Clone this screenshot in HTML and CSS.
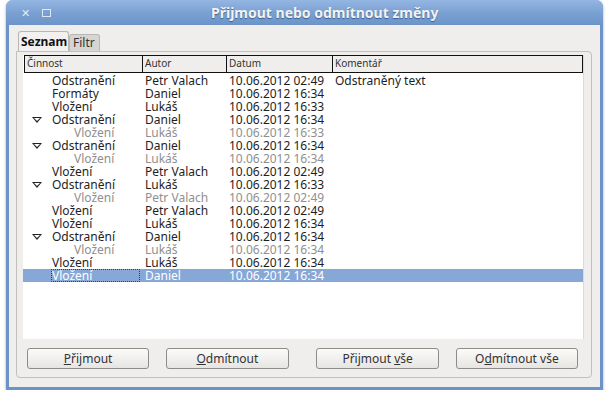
FILE: index.html
```html
<!DOCTYPE html>
<html>
<head>
    <meta charset="UTF-8">
    <title>Přijmout nebo odmítnout změny</title>
    <link rel="stylesheet" href="styles.css">
</head>
<body>
    <div class="window">
        <div class="titlebar">
            <span class="wm-close">&#x2715;</span>
            <span class="wm-max"></span>
            <span class="title">Přijmout nebo odmítnout změny</span>
        </div>
        <div class="content">
            <div class="tabs">
                <div class="tab active">Seznam</div>
                <div class="tab">Filtr</div>
            </div>
            <div class="panel">
                <div class="list">
                    <div class="header">
                        <div class="hcell">Činnost</div>
                        <div class="hcell">Autor</div>
                        <div class="hcell">Datum</div>
                        <div class="hcell">Komentář</div>
                    </div>
                    <div class="rows">
                        <div class="row"><div class="cell action">Odstranění</div><div class="cell">Petr Valach</div><div class="cell">10.06.2012 02:49</div><div class="cell">Odstraněný text</div></div>
                        <div class="row"><div class="cell action">Formáty</div><div class="cell">Daniel</div><div class="cell">10.06.2012 16:34</div><div class="cell"></div></div>
                        <div class="row"><div class="cell action">Vložení</div><div class="cell">Lukáš</div><div class="cell">10.06.2012 16:33</div><div class="cell"></div></div>
                        <div class="row"><div class="cell action"><span class="twisty"></span>Odstranění</div><div class="cell">Daniel</div><div class="cell">10.06.2012 16:34</div><div class="cell"></div></div>
                        <div class="row child"><div class="cell action">Vložení</div><div class="cell">Lukáš</div><div class="cell">10.06.2012 16:33</div><div class="cell"></div></div>
                        <div class="row"><div class="cell action"><span class="twisty"></span>Odstranění</div><div class="cell">Daniel</div><div class="cell">10.06.2012 16:34</div><div class="cell"></div></div>
                        <div class="row child"><div class="cell action">Vložení</div><div class="cell">Lukáš</div><div class="cell">10.06.2012 16:34</div><div class="cell"></div></div>
                        <div class="row"><div class="cell action">Vložení</div><div class="cell">Petr Valach</div><div class="cell">10.06.2012 02:49</div><div class="cell"></div></div>
                        <div class="row"><div class="cell action"><span class="twisty"></span>Odstranění</div><div class="cell">Lukáš</div><div class="cell">10.06.2012 16:33</div><div class="cell"></div></div>
                        <div class="row child"><div class="cell action">Vložení</div><div class="cell">Petr Valach</div><div class="cell">10.06.2012 02:49</div><div class="cell"></div></div>
                        <div class="row"><div class="cell action">Vložení</div><div class="cell">Petr Valach</div><div class="cell">10.06.2012 02:49</div><div class="cell"></div></div>
                        <div class="row"><div class="cell action">Vložení</div><div class="cell">Lukáš</div><div class="cell">10.06.2012 16:34</div><div class="cell"></div></div>
                        <div class="row"><div class="cell action"><span class="twisty"></span>Odstranění</div><div class="cell">Daniel</div><div class="cell">10.06.2012 16:34</div><div class="cell"></div></div>
                        <div class="row child"><div class="cell action">Vložení</div><div class="cell">Lukáš</div><div class="cell">10.06.2012 16:34</div><div class="cell"></div></div>
                        <div class="row"><div class="cell action">Vložení</div><div class="cell">Lukáš</div><div class="cell">10.06.2012 16:34</div><div class="cell"></div></div>
                        <div class="row selected"><div class="cell action"><span class="focus">Vložení</span></div><div class="cell">Daniel</div><div class="cell">10.06.2012 16:34</div><div class="cell"></div></div>
                    </div>
                </div>
                <div class="buttons">
                    <button class="btn"><u>P</u>řijmout</button>
                    <button class="btn"><u>O</u>dmítnout</button>
                    <span class="spacer"></span>
                    <button class="btn">Přijmout <u>v</u>še</button>
                    <button class="btn">O<u>d</u>mítnout vše</button>
                </div>
            </div>
        </div>
    </div>
</body>
</html>
```

FILE: styles.css
```css
body {
    margin: 0;
    background-color: #ffffff;
    font-family: "Noto Sans", "DejaVu Sans", sans-serif;
    font-size: 12px;
    color: #222222;
}

.window {
    margin-left: 6px;
    width: 591px;
    height: 387px;
    border: 3px solid #6b93c7;
    border-top: none;
    border-radius: 7px 7px 0 0;
    background-color: #efeeec;
    box-shadow: 0 1px 3px rgba(0, 0, 0, 0.35);
}

.titlebar {
    height: 25px;
    margin: 0 -3px;
    border-radius: 7px 7px 0 0;
    background: linear-gradient(#94b6e2, #7ba1d3 50%, #6c94c8);
    display: flex;
    align-items: center;
}

.wm-close {
    color: #e6ecf4;
    font-size: 11px;
    font-weight: bold;
    margin-left: 15px;
    width: 12px;
}

.wm-max {
    width: 7px;
    height: 6px;
    border: 1px solid #dfe7f2;
    margin-left: 9px;
}

.title {
    margin-left: 160px;
    color: #f2f2f2;
    font-size: 14px;
    font-weight: bold;
    text-shadow: 0 1px 1px #3d5f8c;
}

.content {
    padding: 6px 8px 0 7px;
}

.tabs {
    display: flex;
    align-items: flex-end;
    height: 20px;
    padding-left: 2px;
}

.tab {
    height: 16px;
    padding: 0 4px 0 3px;
    line-height: 16px;
    background-color: #d7d5d1;
    border: 1px solid #b9b7b2;
    border-bottom: none;
    border-radius: 3px 3px 0 0;
    color: #333333;
}

.tab.active {
    height: 19px;
    line-height: 20px;
    padding: 0 3px 0 2px;
    width: 44px;
    background-color: #f2f1f0;
    font-weight: bold;
    color: #111111;
}

.panel {
    height: 324px;
    border: 1px solid #c2c0bb;
    border-radius: 0 4px 4px 4px;
    padding: 1px 7px 0 6px;
}

.list {
    height: 284px;
    background-color: #ffffff;
    border-right: 1px solid #dcdad6;
}

.header {
    display: grid;
    grid-template-columns: 117px 84px 106px 1fr;
    height: 16px;
    margin-top: 2px;
    margin-left: 1px;
    border: 1px solid #111111;
    background-color: #efeeec;
}

.hcell {
    font-size: 10px;
    line-height: 15px;
    padding-left: 2px;
    color: #333333;
    border-left: 1px solid #111111;
}

.hcell:first-child {
    border-left: none;
}

.rows {
    padding-top: 1px;
}

.row {
    display: grid;
    grid-template-columns: 118px 84px 106px 1fr;
    height: 13px;
    line-height: 13px;
    color: #1e1e1e;
    white-space: nowrap;
}

.cell {
    padding-left: 4px;
}

.cell.action {
    padding-left: 29px;
    position: relative;
}

.row.child {
    color: #8f8f8f;
}

.row.child .cell.action {
    padding-left: 51px;
}

.twisty {
    position: absolute;
    left: 9px;
    top: 4px;
    width: 0;
    height: 0;
    border-left: 5px solid transparent;
    border-right: 5px solid transparent;
    border-top: 6px solid #222222;
}

.twisty::after {
    content: "";
    position: absolute;
    left: -3px;
    top: -5px;
    border-left: 3px solid transparent;
    border-right: 3px solid transparent;
    border-top: 3px solid #ffffff;
}

.row.selected {
    background-color: #87a7d6;
    color: #ffffff;
}

.row.selected .cell.action {
    padding-left: 28px;
}

.focus {
    display: inline-block;
    width: 88px;
    outline: 1px dotted #30405a;
    outline-offset: -1px;
    padding-left: 1px;
}

.buttons {
    display: flex;
    padding: 9px 6px 0 4px;
}

.btn {
    width: 123px;
    height: 21px;
    font-family: "Noto Sans", "DejaVu Sans", sans-serif;
    font-size: 12px;
    color: #333333;
    border: 1px solid #8e8c88;
    border-radius: 3px;
    background: linear-gradient(#fbfbfa, #e6e5e2);
    padding: 0;
    margin-right: 17px;
}

.btn:last-child {
    margin-right: 0;
}

.spacer {
    width: 11px;
}
```
